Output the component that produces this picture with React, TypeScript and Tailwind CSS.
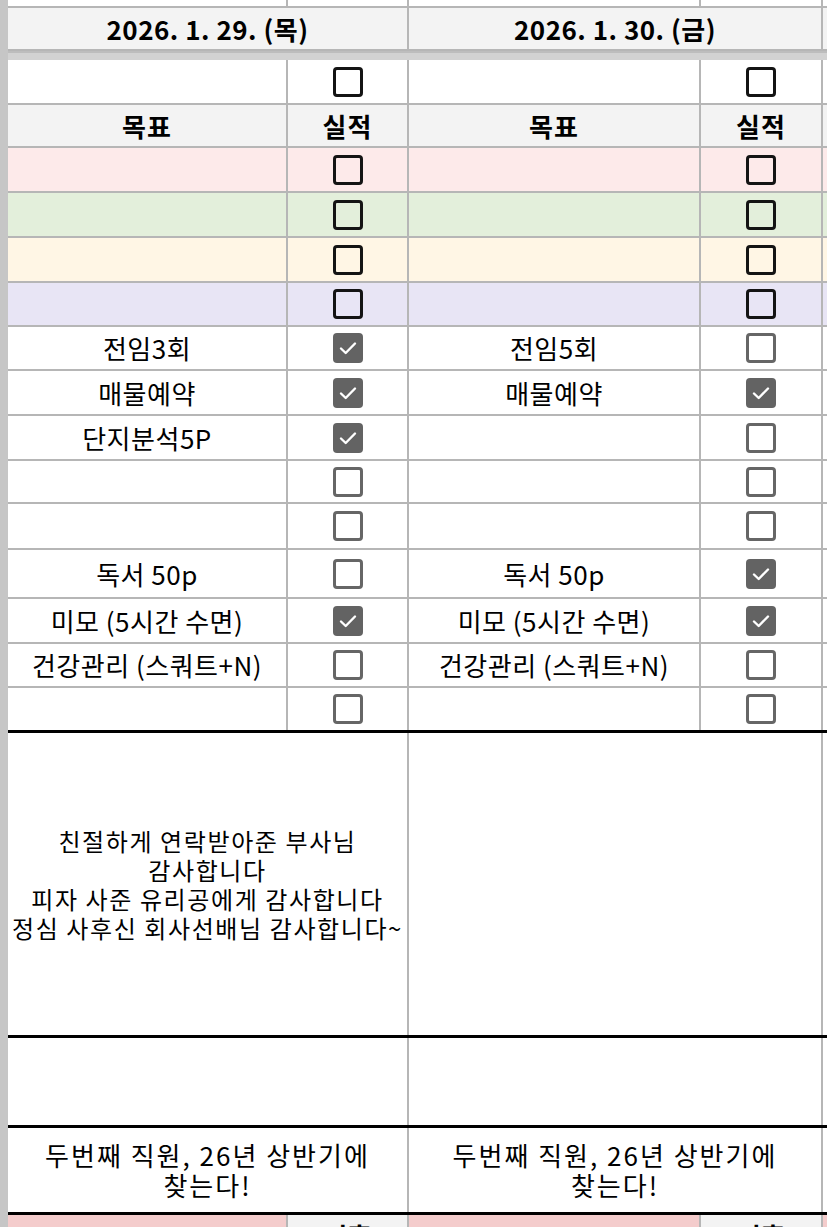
import React from "react";

type Kind = "bold" | "empty" | "checked";

function Cb({ kind }: { kind: Kind }) {
  if (kind === "checked")
    return (
      <div className="w-[30px] h-[30px] rounded-[4px] bg-[#636363] flex items-center justify-center">
        <svg width="30" height="30" viewBox="0 0 30 30">
          <path d="M8 15.5 L12.7 20 L22 10.5" stroke="white" strokeWidth="2.4" fill="none" strokeLinecap="round" strokeLinejoin="round" />
        </svg>
      </div>
    );
  if (kind === "bold") return <div className="w-[30px] h-[30px] rounded-[4px] border-[3px] border-[#141414]" />;
  return <div className="w-[30px] h-[30px] rounded-[4px] border-[3px] border-[#666666]" />;
}

const cellA = "w-[280px] shrink-0 border-r-2 border-[#b6b6b6] flex items-center justify-center";
const cellB = "w-[121px] shrink-0 border-r-2 border-[#b6b6b6] flex items-center justify-center";
const cellC = "w-[292px] shrink-0 border-r-2 border-[#b6b6b6] flex items-center justify-center";
const cellD = "w-[122px] shrink-0 border-r-2 border-[#b6b6b6] flex items-center justify-center";
const cellE = "flex-1";

const colored = [
  { h: "h-[45px]", bg: "bg-[#fdeaea]" },
  { h: "h-[45px]", bg: "bg-[#e3efdb]" },
  { h: "h-[45px]", bg: "bg-[#fff6e5]" },
  { h: "h-[44px]", bg: "bg-[#e8e5f5]" },
];

const goals: { h: string; l: string; lk: Kind; r: string; rk: Kind; last?: boolean }[] = [
  { h: "h-[44px]", l: "전임3회", lk: "checked", r: "전임5회", rk: "empty" },
  { h: "h-[45px]", l: "매물예약", lk: "checked", r: "매물예약", rk: "checked" },
  { h: "h-[45px]", l: "단지분석5P", lk: "checked", r: "", rk: "empty" },
  { h: "h-[43px]", l: "", lk: "empty", r: "", rk: "empty" },
  { h: "h-[46px]", l: "", lk: "empty", r: "", rk: "empty" },
  { h: "h-[49px]", l: "독서 50p", lk: "empty", r: "독서 50p", rk: "checked" },
  { h: "h-[45px]", l: "미모 (5시간 수면)", lk: "checked", r: "미모 (5시간 수면)", rk: "checked" },
  { h: "h-[44px]", l: "건강관리 (스쿼트+N)", lk: "empty", r: "건강관리 (스쿼트+N)", rk: "empty" },
  { h: "h-[45px]", l: "", lk: "empty", r: "", rk: "empty", last: true },
];

export default function App() {
  return (
    <div className="w-[827px] h-[1227px] overflow-hidden bg-white flex font-['Noto_Sans_CJK_KR',sans-serif] text-black">
      <div className="w-[8px] shrink-0 bg-[#c6c6c6]" />
      <div className="flex-1 flex flex-col">
        {/* top partial row */}
        <div className="h-[8px] shrink-0 flex border-b-2 border-[#b6b6b6] bg-white">
          <div className={cellA} />
          <div className={cellB} />
          <div className={cellC} />
          <div className={cellD} />
          <div className={cellE} />
        </div>
        {/* date row */}
        <div className="h-[43px] shrink-0 flex border-b-2 border-[#b6b6b6] bg-[#f3f3f3]">
          <div className="w-[401px] shrink-0 border-r-2 border-[#b6b6b6] flex items-center justify-center text-[26px] font-bold tracking-[0.5px] leading-none">
            2026. 1. 29. (목)
          </div>
          <div className="w-[414px] shrink-0 border-r-2 border-[#b6b6b6] flex items-center justify-center text-[26px] font-bold tracking-[0.5px] leading-none">
            2026. 1. 30. (금)
          </div>
          <div className={cellE} />
        </div>
        {/* frozen separator */}
        <div className="h-[9px] shrink-0 bg-[#d2d2d2] border-t-2 border-[#bdbdbd]" />
        {/* checkbox row */}
        <div className="h-[45px] shrink-0 flex border-b-2 border-[#b6b6b6] bg-white">
          <div className={cellA} />
          <div className={cellB}>
            <Cb kind="bold" />
          </div>
          <div className={cellC} />
          <div className={cellD}>
            <Cb kind="bold" />
          </div>
          <div className={cellE} />
        </div>
        {/* header row */}
        <div className="h-[43px] shrink-0 flex border-b-2 border-[#b6b6b6] bg-[#f3f3f3] text-[26px] font-bold tracking-[1px] leading-none">
          <div className={cellA}>목표</div>
          <div className={cellB}>실적</div>
          <div className={cellC}>목표</div>
          <div className={cellD}>실적</div>
          <div className={cellE} />
        </div>
        {colored.map((c, i) => (
          <div key={i} className={`${c.h} shrink-0 flex border-b-2 border-[#b6b6b6] ${c.bg}`}>
            <div className={cellA} />
            <div className={cellB}>
              <Cb kind="bold" />
            </div>
            <div className={cellC} />
            <div className={cellD}>
              <Cb kind="bold" />
            </div>
            <div className={cellE} />
          </div>
        ))}
        {goals.map((g, i) => (
          <div
            key={i}
            className={`${g.h} shrink-0 flex bg-white text-[26px] tracking-[0.5px] leading-none ${g.last ? "border-b-[3px] border-black" : "border-b-2 border-[#b6b6b6]"}`}
          >
            <div className={`${cellA} whitespace-nowrap`}>{g.l}</div>
            <div className={cellB}>
              <Cb kind={g.lk} />
            </div>
            <div className={`${cellC} whitespace-nowrap`}>{g.r}</div>
            <div className={cellD}>
              <Cb kind={g.rk} />
            </div>
            <div className={cellE} />
          </div>
        ))}
        {/* memo */}
        <div className="h-[305px] shrink-0 flex border-b-[3px] border-black bg-white">
          <div className="w-[401px] shrink-0 border-r-2 border-[#b6b6b6] flex items-center justify-center text-center text-[24px] tracking-[1.6px] leading-[29px] whitespace-nowrap">
            <div>
              친절하게 연락받아준 부사님
              <br />
              감사합니다
              <br />
              피자 사준 유리공에게 감사합니다
              <br />
              정심 사후신 회사선배님 감사합니다~
            </div>
          </div>
          <div className="w-[414px] shrink-0 border-r-2 border-[#b6b6b6]" />
          <div className={cellE} />
        </div>
        {/* empty */}
        <div className="h-[90px] shrink-0 flex border-b-[3px] border-black bg-white">
          <div className="w-[401px] shrink-0 border-r-2 border-[#b6b6b6]" />
          <div className="w-[414px] shrink-0 border-r-2 border-[#b6b6b6]" />
          <div className={cellE} />
        </div>
        {/* resolution */}
        <div className="h-[87px] shrink-0 flex border-b-[3px] border-black bg-white text-[26px] tracking-[2px] leading-[30px] text-center">
          <div className="w-[401px] shrink-0 border-r-2 border-[#b6b6b6] flex items-center justify-center whitespace-nowrap">
            <div>
              두번째 직원, 26년 상반기에
              <br />
              찾는다!
            </div>
          </div>
          <div className="w-[414px] shrink-0 border-r-2 border-[#b6b6b6] flex items-center justify-center whitespace-nowrap">
            <div>
              두번째 직원, 26년 상반기에
              <br />
              찾는다!
            </div>
          </div>
          <div className={cellE} />
        </div>
        {/* next section header (cut off by the window) */}
        <div className="h-[44px] shrink-0 flex border-b-2 border-[#b6b6b6] text-[26px] font-bold leading-none">
          <div className={`${cellA} bg-[#f4cccc]`} />
          <div className={`${cellB} bg-[#f3f3f3]`}>미흡</div>
          <div className={`${cellC} bg-[#f4cccc]`} />
          <div className={`${cellD} bg-[#f3f3f3]`}>미흡</div>
          <div className={`${cellE} bg-[#f4cccc]`} />
        </div>
      </div>
    </div>
  );
}
